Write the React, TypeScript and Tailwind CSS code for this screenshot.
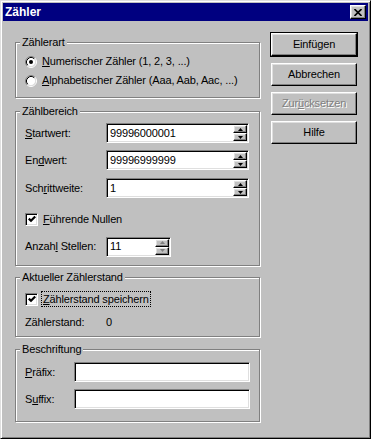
import type { ReactNode } from "react";

const raised =
  "border border-t-white border-l-white border-r-black border-b-black bg-[#c0c0c0] shadow-[inset_-1px_-1px_0_#808080,inset_1px_1px_0_#dfdfdf]";
const sunken =
  "border border-t-[#808080] border-l-[#808080] border-r-white border-b-white bg-white shadow-[inset_1px_1px_0_#000,inset_-1px_-1px_0_#dfdfdf]";

function Group({
  label,
  className,
  children,
}: {
  label: string;
  className: string;
  children: ReactNode;
}) {
  return (
    <div
      className={`relative border border-[#808080] shadow-[inset_1px_1px_0_#fff,1px_1px_0_#fff] ${className}`}
    >
      <span className="absolute -top-[7px] left-[4px] bg-[#c0c0c0] px-[2px] leading-[13px]">
        {label}
      </span>
      {children}
    </div>
  );
}

function Radio({ checked }: { checked?: boolean }) {
  return (
    <svg width="12" height="12" viewBox="0 0 12 12" className="shrink-0">
      <circle cx="6" cy="6" r="4.5" fill="#fff" />
      <path d="M2.11 9.89A5.5 5.5 0 0 1 9.89 2.11" fill="none" stroke="#808080" />
      <path d="M9.89 2.11A5.5 5.5 0 0 1 2.11 9.89" fill="none" stroke="#fff" />
      <path d="M2.82 9.18A4.5 4.5 0 0 1 9.18 2.82" fill="none" stroke="#000" />
      <path d="M9.18 2.82A4.5 4.5 0 0 1 2.82 9.18" fill="none" stroke="#dfdfdf" />
      {checked && <circle cx="6" cy="6" r="2" fill="#000" />}
    </svg>
  );
}

function Check() {
  return (
    <div className={`flex h-[13px] w-[13px] shrink-0 items-center justify-center ${sunken}`}>
      <svg width="8" height="8" viewBox="0 0 8 8">
        <path d="M0.8 3.6L3 5.8L7.2 1.4" fill="none" stroke="#000" strokeWidth="2.2" />
      </svg>
    </div>
  );
}

function Arrow({ up, dim }: { up?: boolean; dim?: boolean }) {
  return (
    <svg width="5" height="3" viewBox="0 0 5 3">
      <path d={up ? "M2.5 0L5 3H0Z" : "M0 0H5L2.5 3Z"} fill={dim ? "#808080" : "#000"} />
    </svg>
  );
}

function Spinner({ dim }: { dim?: boolean }) {
  return (
    <div className="flex h-full w-[14px] flex-col">
      <div className={`flex flex-1 items-center justify-center ${raised}`}>
        <Arrow up dim={dim} />
      </div>
      <div className={`flex flex-1 items-center justify-center ${raised}`}>
        <Arrow dim={dim} />
      </div>
    </div>
  );
}

function Field({
  value,
  width,
  spin,
  dim,
}: {
  value?: string;
  width: string;
  spin?: boolean;
  dim?: boolean;
}) {
  return (
    <div className={`flex h-[20px] items-center p-[1px] ${width} ${sunken}`}>
      <span className="flex-1 pl-[2px]">{value}</span>
      {spin && <Spinner dim={dim} />}
    </div>
  );
}

function Btn({ children, disabled }: { children: ReactNode; disabled?: boolean }) {
  return (
    <div
      className={`flex h-[23px] w-[86px] items-center justify-center ${raised} ${
        disabled ? "text-[#808080] [text-shadow:1px_1px_0_#fff]" : ""
      }`}
    >
      {children}
    </div>
  );
}

export default function App() {
  return (
    <div className="h-[439px] w-[371px] bg-[#c0c0c0] font-['Liberation_Sans',Arial,sans-serif] text-[11px] tracking-[-0.15px] text-black">
      <div className="flex h-full flex-col border border-t-[#dfdfdf] border-l-[#dfdfdf] border-r-black border-b-black p-[2px] shadow-[inset_1px_1px_0_#fff,inset_-1px_-1px_0_#808080]">
        <div className="flex h-[18px] items-center justify-between bg-[#000080] pl-[2px] pr-[2px]">
          <span className="text-[12px] font-bold tracking-normal text-white">Zähler</span>
          <div className={`flex h-[14px] w-[16px] items-center justify-center ${raised}`}>
            <svg width="8" height="7" viewBox="0 0 8 7">
              <path d="M0.5 0L7.5 7M7.5 0L0.5 7" stroke="#000" strokeWidth="1.6" />
            </svg>
          </div>
        </div>

        <div className="flex items-start">
          <div className="ml-[12px] mt-[21px] flex w-[245px] flex-col">
            <Group label="Zählerart" className="h-[56px] pl-[9px] pt-[9px]">
              <div className="flex h-[19px] items-center gap-[5px]">
                <Radio checked />
                <span>
                  <u>N</u>umerischer Zähler (1, 2, 3, ...)
                </span>
              </div>
              <div className="flex h-[19px] items-center gap-[5px]">
                <Radio />
                <span>
                  <u>A</u>lphabetischer Zähler (Aaa, Aab, Aac, ...)
                </span>
              </div>
            </Group>

            <Group label="Zählbereich" className="mt-[13px] h-[155px] pl-[9px] pt-[11px]">
              <div className="flex items-center">
                <span className="w-[81px]">
                  <u>S</u>tartwert:
                </span>
                <Field value="99996000001" width="w-[143px]" spin />
              </div>
              <div className="mt-[7px] flex items-center">
                <span className="w-[81px]">
                  En<u>d</u>wert:
                </span>
                <Field value="99996999999" width="w-[143px]" spin />
              </div>
              <div className="mt-[8px] flex items-center">
                <span className="w-[81px]">
                  Sch<u>r</u>ittweite:
                </span>
                <Field value="1" width="w-[143px]" spin />
              </div>
              <div className="mt-[13px] flex items-center gap-[5px]">
                <Check />
                <span>
                  <u>F</u>ührende Nullen
                </span>
              </div>
              <div className="mt-[9px] flex items-center">
                <span className="w-[81px]">
                  Anzah<u>l</u> Stellen:
                </span>
                <Field value="11" width="w-[65px]" spin dim />
              </div>
            </Group>

            <Group label="Aktueller Zählerstand" className="mt-[11px] h-[60px] pl-[9px] pt-[13px]">
              <div className="flex items-center gap-[3px]">
                <Check />
                <span className="flex h-[16px] items-center border border-dotted border-black px-[1px]">
                  <u>Z</u>ählerstand speichern
                </span>
              </div>
              <div className="mt-[8px] flex h-[14px] items-center">
                <span className="w-[81px]">Zählerstand:</span>
                <span>0</span>
              </div>
            </Group>

            <Group label="Beschriftung" className="mt-[12px] h-[73px] pl-[9px] pt-[12px]">
              <div className="flex items-center">
                <span className="w-[49px]">
                  <u>P</u>räfix:
                </span>
                <Field width="w-[176px]" />
              </div>
              <div className="mt-[7px] flex items-center">
                <span className="w-[49px]">
                  S<u>u</u>ffix:
                </span>
                <Field width="w-[176px]" />
              </div>
            </Group>
          </div>

          <div className="ml-[10px] mt-[11px] flex flex-col gap-[6px]">
            <div className="w-[88px] border border-black">
              <Btn>Einfügen</Btn>
            </div>
            <div className="ml-[1px]">
              <Btn>Abbrechen</Btn>
            </div>
            <div className="ml-[1px]">
              <Btn disabled>
                <span>
                  Zur<u>ü</u>cksetzen
                </span>
              </Btn>
            </div>
            <div className="ml-[1px]">
              <Btn>Hilfe</Btn>
            </div>
          </div>
        </div>
      </div>
    </div>
  );
}
